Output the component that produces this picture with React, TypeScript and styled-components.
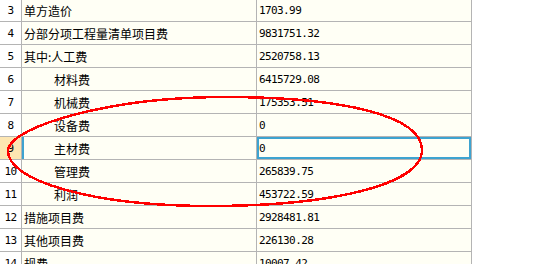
import React from 'react';
import styled, { createGlobalStyle } from 'styled-components';

interface CostRow {
  no: number;
  name: string;
  value: string;
  sub?: boolean;
}

const rows: CostRow[] = [
  { no: 3, name: '单方造价', value: '1703.99' },
  { no: 4, name: '分部分项工程量清单项目费', value: '9831751.32' },
  { no: 5, name: '其中:人工费', value: '2520758.13' },
  { no: 6, name: '材料费', value: '6415729.08', sub: true },
  { no: 7, name: '机械费', value: '175353.51', sub: true },
  { no: 8, name: '设备费', value: '0', sub: true },
  { no: 9, name: '主材费', value: '0', sub: true },
  { no: 10, name: '管理费', value: '265839.75', sub: true },
  { no: 11, name: '利润', value: '453722.59', sub: true },
  { no: 12, name: '措施项目费', value: '2928481.81' },
  { no: 13, name: '其他项目费', value: '226130.28' },
  { no: 14, name: '规费', value: '10007.42' },
];

const selectedNo = 9;

const GlobalStyle = createGlobalStyle`
  html, body {
    margin: 0;
    padding: 0;
    background: #ffffff;
    overflow: hidden;
  }
`;

const Page = styled.div`
  position: relative;
  width: 556px;
  height: 264px;
  overflow: hidden;
  background: #ffffff;
`;

const Sheet = styled.div`
  display: grid;
  grid-template-columns: 22px 235px 215px;
  grid-auto-rows: 23px;
  margin-top: -1px;
  width: 472px;
  font-family: 'Noto Sans CJK SC', sans-serif;
`;

const Cell = styled.div`
  box-sizing: border-box;
  border-right: 1px solid #b4b4b4;
  border-bottom: 1px solid #b4b4b4;
  display: flex;
  align-items: center;
  white-space: nowrap;
  overflow: hidden;
`;

const NoCell = styled(Cell)<{ $active?: boolean }>`
  justify-content: center;
  background: ${(p) => (p.$active ? '#fde6b2' : '#ffffff')};
  font-family: 'DejaVu Sans Mono', monospace;
  font-size: 11px;
  letter-spacing: -0.5px;
  color: #000;
`;

const NameCell = styled(Cell)<{ $sub?: boolean; $active?: boolean }>`
  background: #fffff5;
  padding-left: ${(p) => (p.$sub ? '32px' : '2px')};
  font-size: 12px;
  color: #000;
  box-shadow: ${(p) => (p.$active ? 'inset 2px 0 0 #3ea3d0' : 'none')};
`;

const ValueCell = styled(Cell)<{ $active?: boolean }>`
  background: #fffff5;
  padding-left: 2px;
  font-family: 'DejaVu Sans Mono', monospace;
  font-size: 11px;
  letter-spacing: -0.6px;
  color: #000;
  box-shadow: ${(p) => (p.$active ? 'inset 0 0 0 2px #3ea3d0' : 'none')};
`;

const Mark = styled.svg`
  position: absolute;
  left: 0;
  top: 0;
  pointer-events: none;
`;

export default function App() {
  return (
    <>
      <GlobalStyle />
      <Page>
        <Sheet>
          {rows.map((r) => {
            const active = r.no === selectedNo;
            return (
              <React.Fragment key={r.no}>
                <NoCell $active={active}>{r.no}</NoCell>
                <NameCell $sub={r.sub} $active={active}>{r.name}</NameCell>
                <ValueCell $active={active}>{r.value}</ValueCell>
              </React.Fragment>
            );
          })}
        </Sheet>
        {/* hand-drawn circle around the sub items */}
        <Mark width="556" height="264" viewBox="0 0 556 264">
          <path
            d="M 8 150 C 12 126, 110 97, 225 97 C 340 97, 422 115, 422 150 C 422 185, 330 206, 210 206 C 90 206, 6 180, 8 150 Z"
            fill="none"
            stroke="#ff0000"
            strokeWidth="2.5"
            shapeRendering="crispEdges"
          />
        </Mark>
      </Page>
    </>
  );
}
